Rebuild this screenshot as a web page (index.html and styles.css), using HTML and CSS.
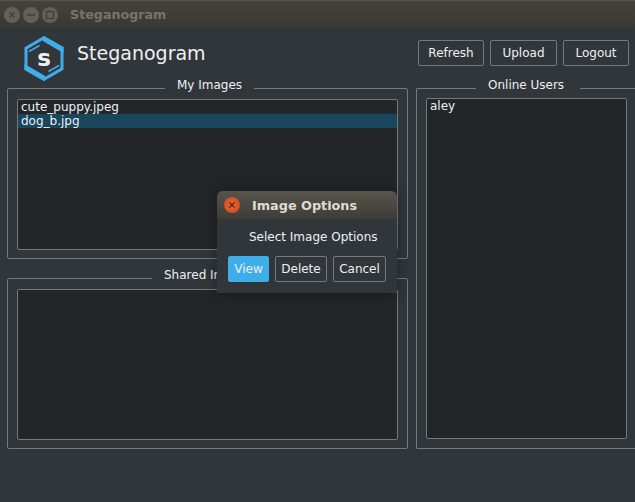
FILE: index.html
```html
<!DOCTYPE html>
<html lang="en">
<head>
  <meta charset="UTF-8" />
  <meta name="viewport" content="width=device-width, initial-scale=1.0" />
  <title>Steganogram</title>
  <link rel="stylesheet" href="styles.css">
</head>
<body>
  <div class="titlebar">
    <span class="win-btn"><svg width="16" height="16" viewBox="0 0 16 16"><path d="M5.500 5.500l5 5M10.500 5.500l-5 5" stroke="#3f3e39" stroke-width="1.300"/></svg></span>
    <span class="win-btn"><svg width="16" height="16" viewBox="0 0 16 16"><path d="M4 8h8" stroke="#3f3e39" stroke-width="1.500"/></svg></span>
    <span class="win-btn"><svg width="16" height="16" viewBox="0 0 16 16"><rect x="4.500" y="4.500" width="7" height="7" fill="none" stroke="#3f3e39" stroke-width="1.300"/></svg></span>
    <span class="win-title">Steganogram</span>
  </div>

  <div class="header">
    <svg class="logo" width="40" height="45" viewBox="0 0 40 45">
      <path class="logo-line" d="M20 1.800L38 12.200V32.800L20 43.200L2 32.800V12.200Z"/>
      <path class="logo-fill" d="M20 0L39.500 11V17L35.500 14.700L20 5.800L17 3Z"/>
      <path class="logo-fill" d="M20 45L0.500 34V28L4.500 30.300L20 39.200L23 42Z"/>
      <path class="logo-slot" d="M5 15.500L15.500 9.500"/>
      <path class="logo-slot" d="M24.500 35.500L35 29.500"/>
      <text class="logo-s" x="20" y="29.500">s</text>
    </svg>
    <span class="app-name">Steganogram</span>
    <div class="actions">
      <button class="btn btn-refresh">Refresh</button>
      <button class="btn btn-upload">Upload</button>
      <button class="btn btn-logout">Logout</button>
    </div>
  </div>

  <div class="panels">
    <div class="left-col">
      <fieldset class="group">
        <legend class="legend-images">My Images</legend>
        <ul class="list">
          <li>cute_puppy.jpeg</li>
          <li class="selected">dog_b.jpg</li>
        </ul>
      </fieldset>
      <fieldset class="group">
        <legend class="legend-shared">Shared Images</legend>
        <ul class="list"></ul>
      </fieldset>
    </div>
    <fieldset class="group users">
      <legend class="legend-users">Online Users</legend>
      <ul class="list">
        <li>aley</li>
      </ul>
    </fieldset>
  </div>

  <div class="dialog">
    <div class="dialog-title">
      <span class="dialog-close"><svg width="16" height="16" viewBox="0 0 16 16"><path d="M5.500 5.500l5 5M10.500 5.500l-5 5" stroke="#5a2412" stroke-width="1.200"/></svg></span>
      <span class="dialog-name">Image Options</span>
    </div>
    <div class="dialog-body">
      <p class="dialog-msg">Select Image Options</p>
      <div class="dialog-actions">
        <button class="btn btn-view">View</button>
        <button class="btn btn-delete">Delete</button>
        <button class="btn btn-cancel">Cancel</button>
      </div>
    </div>
  </div>
</body>
</html>
```

FILE: styles.css
```css
* {
  box-sizing: border-box;
}
html, body {
  height: 100%;
}
body {
  margin: 0;
  background: #31363b;
  color: #eff0f1;
  font-family: "DejaVu Sans", sans-serif;
  font-size: 12px;
  overflow: hidden;
}
.titlebar {
  height: 28px;
  display: flex;
  align-items: center;
  gap: 3px;
  padding-left: 4px;
  background: linear-gradient(#44423d, #393833);
  border-top: 1px solid #55534d;
}
.win-btn {
  width: 16px;
  height: 16px;
  border-radius: 50%;
  background: #62605a;
  display: flex;
}
.win-title {
  margin-left: 9px;
  font-weight: bold;
  font-size: 12.700px;
  color: #76746e;
}
.header {
  height: 50px;
  display: flex;
  padding-left: 24px;
}
.logo {
  margin-top: 8px;
  flex-shrink: 0;
}
.logo-line {
  fill: #31363b;
  stroke: #3daee9;
  stroke-width: 3;
}
.logo-fill {
  fill: #3daee9;
}
.logo-slot {
  fill: none;
  stroke: #3daee9;
  stroke-width: 1.500;
}
.logo-s {
  fill: #eff0f1;
  font-size: 23px;
  font-weight: bold;
  text-anchor: middle;
}
.app-name {
  margin: 11px 0 0 13px;
  font-size: 19px;
  line-height: 28px;
}
.actions {
  margin-left: auto;
  padding: 12px 6px 0 0;
  display: flex;
  gap: 6px;
}
.btn {
  height: 26px;
  padding: 0;
  background: #31363b;
  border: 1px solid #76797c;
  border-radius: 2px;
  color: #eff0f1;
  font: inherit;
}
.btn-refresh { width: 66px; }
.btn-upload { width: 67px; }
.btn-logout { width: 66px; }
.panels {
  display: flex;
  gap: 8px;
  padding-left: 7px;
}
.left-col {
  flex: none;
  width: 401px;
  display: flex;
  flex-direction: column;
  gap: 9px;
}
.group {
  flex: none;
  margin: 0;
  padding: 0 9px 8px;
  height: 181px;
  min-width: 0;
  border: 1px solid #76797c;
  border-radius: 2px;
}
.group legend {
  padding: 0 12px 6px;
  line-height: 15px;
}
.group .legend-images {
  margin-left: 148px;
}
.group .legend-shared {
  margin-left: 135px;
}
.group .legend-users {
  margin-left: 50px;
  padding-right: 16px;
}
.users {
  width: 219px;
  height: 371px;
  border-right: 0;
  border-radius: 2px 0 0 2px;
}
.list {
  margin: 0;
  padding: 0;
  list-style: none;
  width: 381px;
  height: 151px;
  background: #232629;
  border: 1px solid #76797c;
  border-radius: 2px;
  line-height: 14px;
}
.users .list {
  width: 201px;
  height: 341px;
  margin-top: -1px;
}
.list li {
  padding-left: 3px;
}
.list .selected {
  background: #18465d;
}
.dialog {
  position: absolute;
  left: 217px;
  top: 191px;
  width: 180px;
  height: 102px;
  background: #31363b;
  border-radius: 6px 6px 0 0;
  box-shadow: 0 0 14px rgba(0, 0, 0, 0.35);
}
.dialog-title {
  height: 28px;
  display: flex;
  align-items: center;
  gap: 12px;
  padding-left: 7px;
  background: linear-gradient(#57544b, #3d3c37);
  border-radius: 6px 6px 0 0;
  font-weight: bold;
  font-size: 12.800px;
  color: #dfdbd2;
}
.dialog-name {
  padding-top: 1px;
}
.dialog-close {
  width: 16px;
  height: 16px;
  border-radius: 50%;
  background: radial-gradient(#f0683a, #c8431c);
  display: flex;
}
.dialog-msg {
  margin: 10px 0 0 32px;
  line-height: 16px;
}
.dialog-actions {
  margin-top: 11px;
  padding-left: 11px;
  display: flex;
  gap: 6px;
}
.btn-view {
  width: 41px;
  background: #3daee9;
  border-color: #3daee9;
}
.btn-delete { width: 52px; }
.btn-cancel { width: 53px; }
```
